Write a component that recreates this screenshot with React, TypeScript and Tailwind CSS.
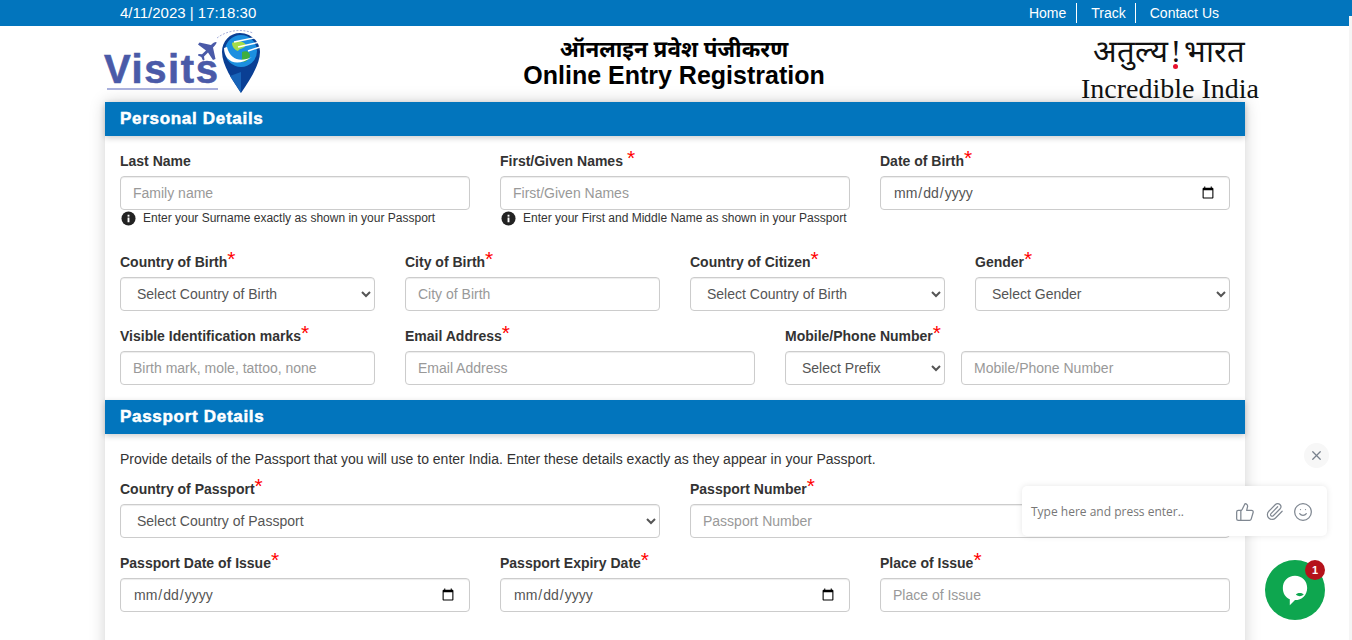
import React from 'react';
import { ThumbsUp, Paperclip, Smile, X } from 'lucide-react';

const Label = ({ text, spaced }: { text: string; spaced?: boolean }) => (
  <label className="flex h-[25px] items-start text-[14px] leading-[20px] font-bold text-[#333]">
    <span>{text}</span>
    <span className={`-mt-[3px] text-[21px] leading-[20px] font-normal text-[#f00] ${spaced ? 'ml-[4px]' : ''}`}>*</span>
  </label>
);

const inputCls =
  'block h-[34px] w-full rounded-[4px] border border-[#ccc] bg-white px-[12px] text-[14px] text-[#555] shadow-[inset_0_1px_1px_rgba(0,0,0,0.075)] outline-none placeholder:text-[#999]';

const Input = ({ label, placeholder, className }: { label: string; placeholder: string; className?: string }) => (
  <div className={`mb-[15px] ${className ?? ''}`}>
    <Label text={label} />
    <input className={inputCls} placeholder={placeholder} />
  </div>
);

const DateField = ({ label, className }: { label: string; className?: string }) => (
  <div className={`mb-[15px] ${className ?? ''}`}>
    <Label text={label} />
    <input type="date" className={inputCls} />
  </div>
);

const SelectBox = ({ text }: { text: string }) => (
  <select className={inputCls} defaultValue="">
    <option value="">{text}</option>
  </select>
);

const SelectField = ({ label, text, className }: { label: string; text: string; className?: string }) => (
  <div className={`mb-[15px] ${className ?? ''}`}>
    <Label text={label} />
    <SelectBox text={text} />
  </div>
);

const Hint = ({ text }: { text: string }) => (
  <div className="flex h-[27px] items-start gap-[7px] pl-[1px] text-[12px] leading-[16px] text-[#333]">
    <svg width="15" height="15" viewBox="0 0 16 16" className="mt-[1px] shrink-0">
      <circle cx="8" cy="8" r="7.5" fill="#222" />
      <rect x="7" y="7" width="2" height="5" fill="#fff" />
      <rect x="7" y="4" width="2" height="2" fill="#fff" />
    </svg>
    <span>{text}</span>
  </div>
);

const SectionHead = ({ title }: { title: string }) => (
  <div className="flex h-[34px] items-center bg-[#0275bd] px-[15px] text-[17px] font-bold tracking-[0.7px] text-white shadow-[0_2px_6px_rgba(0,0,0,0.2)] [-webkit-text-stroke:0.5px_white]">
    {title}
  </div>
);

const VisitsLogo = () => (
  <div className="flex h-[76px] items-start">
    <div className="mt-[26px] w-[114px] shrink-0">
      <div className="h-[34px] text-[40px] leading-[34px] font-bold tracking-[1.6px] text-[#4a5aa8] [-webkit-text-stroke:0.6px_#4a5aa8]">
        Visits
      </div>
      <div className="mt-[2px] ml-[3px] h-[2px] bg-[#a9b0dc]" />
    </div>
    <svg width="68" height="70" viewBox="0 0 68 70" className="relative mt-[2px] -ml-[24px] shrink-0">
      <path d="M23 10 C32 3 46 0 59 5" fill="none" stroke="#a9b0dc" strokeWidth="1" strokeDasharray="2 1.5" />
      <path d="M22.5 14 C22.8 15.5 21 17.5 19 19.5 L21.5 31 L19 32 L14 24.5 L10 28.5 L10.5 32 L9 32.5 L7.3 29 L4 27.5 L4.5 26 L8 26.3 L12 22.5 L4 16.5 L5.5 14.5 L17 17 C19 15 21 13.7 22.5 14 Z" fill="#4a5aa8" />
      <path d="M46 5 C56 5 66 13 66 24 C66 37 55 53 47 65 C39 53 28 37 28 24 C28 13 36 5 46 5 Z" fill="#0a3f94" />
      <circle cx="47" cy="23" r="16" fill="#1b8fe0" />
      <path d="M38 15 C43 12 50 13 52 17 C50 21 46 20 44 23 C41 22 38 19 38 15 Z" fill="#a5dc4a" />
      <path d="M48 24 C52 22 56 24 56 28 C54 33 50 35 48 33 Z" fill="#3fae3f" />
      <path d="M30 20 C30 33 42 40 58 29 C46 35 36 31 33 19 Z" fill="#fff" />
      <path d="M40 14 L64 9 M44 19 L66 14 M54 23 L66 19" stroke="#fff" strokeWidth="1.4" fill="none" />
      <path d="M47 44 L47 65 L36 48 Z" fill="#1763b8" />
    </svg>
  </div>
);

const IncredibleLogo = () => (
  <div className="flex flex-col items-end font-['Liberation_Serif',serif] text-[#111]">
    <div className="mt-[9px] mr-[15px] flex text-[31px] leading-[34px]">
      <span>अतुल्य</span>
      <span className="relative mx-[3px]">
        !
        <span className="absolute top-[29px] left-[2.5px] h-[5px] w-[5px] rounded-full bg-[#e8112d]" />
      </span>
      <span>भारत</span>
    </div>
    <div className="mt-[5px] mr-[1px] text-[28px] leading-[30px]">Incredible India</div>
  </div>
);

const App = () => {
  return (
    <div className="relative h-[640px] w-full overflow-hidden bg-white font-['Liberation_Sans','Noto_Sans',Arial,sans-serif]">
      <div className="h-[26px] bg-[#0275bd] pr-[133px] pl-[120px] text-[14px] text-white">
        <div className="flex h-[26px] items-center justify-between">
          <div className="pt-[1px] text-[15px]">4/11/2023 | 17:18:30</div>
          <div className="flex items-center">
            <span className="border-r border-white pr-[10px] leading-[20px]">Home</span>
            <span className="border-r border-white px-[14px] pr-[9px] leading-[20px]">Track</span>
            <span className="pl-[14px] leading-[20px]">Contact Us</span>
          </div>
        </div>
      </div>

      <div className="ml-[104px] grid h-[76px] w-[1156px] grid-cols-[1fr_auto_1fr]">
        <VisitsLogo />
        <div className="-ml-[16px] pt-[10px] text-center font-bold text-black">
          <div className="font-['Noto_Sans','Liberation_Sans',sans-serif] text-[22.4px] leading-[26px]">ऑनलाइन प्रवेश पंजीकरण</div>
          <div className="text-[25px] leading-[26px]">Online Entry Registration</div>
        </div>
        <IncredibleLogo />
      </div>

      <div className="ml-[105px] w-[1140px] bg-white shadow-[0_0_15px_rgba(0,0,0,0.18)]">
        <SectionHead title="Personal Details" />
        <div className="px-[15px] pt-[15px]">
          <div className="grid grid-cols-12 gap-x-[30px]">
            <div className="col-span-4">
              <label className="flex h-[25px] text-[14px] leading-[20px] font-bold text-[#333]">Last Name</label>
              <input className={inputCls} placeholder="Family name" />
              <Hint text="Enter your Surname exactly as shown in your Passport" />
            </div>
            <div className="col-span-4">
              <Label text="First/Given Names" spaced />
              <input className={inputCls} placeholder="First/Given Names" />
              <Hint text="Enter your First and Middle Name as shown in your Passport" />
            </div>
            <DateField label="Date of Birth" className="col-span-4" />
          </div>
          <div className="mt-[15px] grid grid-cols-12 gap-x-[30px]">
            <SelectField label="Country of Birth" text="Select Country of Birth" className="col-span-3" />
            <Input label="City of Birth" placeholder="City of Birth" className="col-span-3" />
            <SelectField label="Country of Citizen" text="Select Country of Birth" className="col-span-3" />
            <SelectField label="Gender" text="Select Gender" className="col-span-3" />
            <Input label="Visible Identification marks" placeholder="Birth mark, mole, tattoo, none" className="col-span-3" />
            <Input label="Email Address" placeholder="Email Address" className="col-span-4" />
            <div className="col-span-5 mb-[15px]">
              <Label text="Mobile/Phone Number" />
              <div className="flex gap-[16px]">
                <div className="w-[160px] shrink-0">
                  <SelectBox text="Select Prefix" />
                </div>
                <input className={inputCls} placeholder="Mobile/Phone Number" />
              </div>
            </div>
          </div>
        </div>

        <SectionHead title="Passport Details" />
        <div className="px-[15px] pt-[15px] pb-[40px]">
          <p className="mb-[10px] text-[14px] leading-[20px] text-[#333]">
            Provide details of the Passport that you will use to enter India. Enter these details exactly as they appear in your Passport.
          </p>
          <div className="grid grid-cols-12 gap-x-[30px]">
            <SelectField label="Country of Passport" text="Select Country of Passport" className="col-span-6" />
            <Input label="Passport Number" placeholder="Passport Number" className="col-span-6" />
            <DateField label="Passport Date of Issue" className="col-span-4" />
            <DateField label="Passport Expiry Date" className="col-span-4" />
            <Input label="Place of Issue" placeholder="Place of Issue" className="col-span-4" />
          </div>
        </div>
      </div>

      {/* faded scrollbar strip */}
      <div className="absolute top-[16px] right-0 bottom-0 w-[3px] bg-[#f5f5f5]" />

      {/* chat widget */}
      <div className="absolute top-[443px] left-[1304px] flex h-[25px] w-[25px] items-center justify-center rounded-full bg-[#f7f7f7]">
        <X size={15} className="text-[#77808c]" />
      </div>
      <div className="absolute top-[486px] left-[1022px] flex h-[50px] w-[305px] items-center rounded-[5px] bg-white pt-[1px] pr-[14px] pl-[9px] font-['Open_Sans',sans-serif] text-[12px] text-[#777] shadow-[0_0_6px_rgba(0,0,0,0.1)]">
        <span className="flex-1">Type here and press enter..</span>
        <ThumbsUp size={20} strokeWidth={1.5} className="mr-[10px] text-[#7f8791]" />
        <Paperclip size={19} strokeWidth={1.5} className="mr-[9px] text-[#7f8791]" />
        <Smile size={20} strokeWidth={1.5} className="text-[#7f8791]" />
      </div>
      <div className="absolute top-[560px] left-[1265px] flex h-[60px] w-[60px] items-center justify-center rounded-full bg-[#0ea64f]">
        <svg width="28" height="33" viewBox="0 0 32 38">
          <path d="M16 2 C24 2 30 8 30 16 C30 24 24 30 16 30 L10 36 L10 29 C5 27 2 22 2 16 C2 8 8 2 16 2 Z" fill="#fff" />
          <path d="M17 24 C20 26 23 26 26 24 C25 21 18 21 17 24 Z" fill="#0ea64f" />
        </svg>
      </div>
      <div className="absolute top-[560px] left-[1305px] flex h-[20px] w-[20px] items-center justify-center rounded-full bg-[#b5121b] text-[11px] font-bold text-white">
        1
      </div>
    </div>
  );
};

export default App;
